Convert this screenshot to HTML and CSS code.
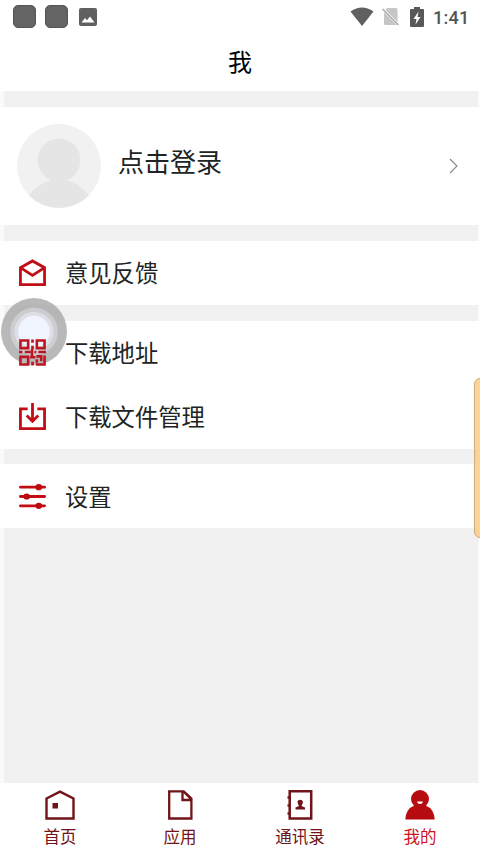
FILE: index.html
```html
<!DOCTYPE html>
<html lang="zh-CN">
<head>
<meta charset="utf-8">
<title>我</title>
<link rel="stylesheet" href="styles.css">
</head>
<body>
<div class="app">
  <div class="status">
    <i class="app-dot"></i><i class="app-dot"></i>
    <svg class="photo" width="18" height="18" viewBox="0 0 18 18"><rect width="18" height="18" rx="2" fill="#606060"/><path d="M2.500 14.500 6 10l2 2.200L11 8.500l4.500 6z" fill="#fff"/></svg>
    <span class="spacer"></span>
    <svg class="wifi" width="24" height="20" viewBox="0 0 24 20"><path d="M.5 4.500Q12-3.500 23.500 4.500L12 19z" fill="#606060"/></svg>
    <svg class="sim" width="19" height="20" viewBox="0 0 19 20"><path d="M6 1h9q1.500 0 1.500 1.500V15L4.500 3zM3 5l13 13H4.500Q3 18 3 16.500z" fill="#c6c6c6"/><path d="M1.500 2l16 16" stroke="#a5a5a5" stroke-width="1.200"/></svg>
    <svg class="battery" width="14" height="20" viewBox="0 0 14 20"><path d="M4 0h6v2h3q1 0 1 1v16q0 1-1 1H1q-1 0-1-1V3q0-1 1-1h3z" fill="#585858"/><path d="M8.500 4.500 3.500 12H6.500L5.500 17.500l5-7.500H7.500z" fill="#fff"/></svg>
    <span class="clock">1:41</span>
  </div>
  <header class="title">我</header>
  <main class="content">
    <section class="profile">
      <svg width="86" height="86" viewBox="0 0 86 86"><defs><clipPath id="round"><circle cx="43" cy="43" r="42"/></clipPath></defs><circle cx="43" cy="43" r="42" fill="#f1f1f1"/><g clip-path="url(#round)" fill="#e5e5e5"><circle cx="43" cy="37" r="21.500"/><path d="M12 74Q21 61 35 57H51Q65 61 74 74V86H12z"/></g></svg>
      <span class="login">点击登录</span>
      <svg class="arrow" width="9" height="16" viewBox="0 0 9 16"><path d="M1 1l7 7-7 7" fill="none" stroke="#858989" stroke-width="1.100"/></svg>
    </section>
    <section class="group">
      <div class="row"><svg class="icon" viewBox="0 0 28 28"><path d="M1.500 9 14 2l12.500 7V26.500h-25zM1.500 9 14 17l12.500-8" fill="none" stroke="#c30d14" stroke-width="2.900"/></svg><span>意见反馈</span></div>
    </section>
    <section class="group">
      <div class="row"><svg class="icon raised" viewBox="0 0 28 28"><g fill="none" stroke="#bd1422" stroke-width="2.700"><path d="M1.500 1.500h8v8h-8zM18.500 1.500h8v8h-8zM1.500 18.500h8v8h-8z"/><path d="M14 .5v3.500M14 7v4M0 13.500h3.500M6 13.500h6M13.500 11v8M11.500 19H17M14 23.500v4M16 13.500h2M20 13.500h8M18 18h5v5M26.500 17v6.500M18.500 21v3.500M17.500 26.500h9v-3"/></g></svg><span>下载地址</span></div>
      <div class="row"><svg class="icon" viewBox="0 0 28 28"><path d="M9 6H1.500v20.500h25V6H19M14 0v19M8 13l6 6 6-6" fill="none" stroke="#c30d14" stroke-width="2.900"/></svg><span>下载文件管理</span></div>
    </section>
    <section class="group">
      <div class="row"><svg class="icon" viewBox="0 0 28 28"><path d="M1.500 4.300h25M1.500 14h25M1.500 23.700h25" stroke="#c30d14" stroke-width="3" stroke-linecap="round"/><g fill="#b90c12"><ellipse cx="20.500" cy="4.300" rx="3.500" ry="3.200"/><ellipse cx="8" cy="14" rx="3.500" ry="3.200"/><ellipse cx="20.500" cy="23.700" rx="3.500" ry="3.200"/></g></svg><span>设置</span></div>
    </section>
  </main>
  <nav class="tabs">
    <div class="tab"><svg viewBox="0 0 30 30"><path d="M1.500 8.500 15 1.700l13.500 6.800v20h-27z" fill="none" stroke="#701419" stroke-width="2.400"/><path d="M7.500 13h5.500v5.500H7.500z" fill="#701419"/></svg><span>首页</span></div>
    <div class="tab"><svg viewBox="0 0 30 30"><path d="M4.200 1.300h14.500l7.700 7.200v20H4.200zM17.500 1.500v8.500h8.500M19 2l7 7" fill="none" stroke="#701419" stroke-width="2.300"/></svg><span>应用</span></div>
    <div class="tab"><svg viewBox="0 0 30 30"><path d="M4.700 1.300h21.500v27.200H4.700z" fill="none" stroke="#701419" stroke-width="2.500"/><path d="M2.500 7.500h3M2.500 15.500h3M2.500 23.500h3" stroke="#701419" stroke-width="2.600"/><path d="M10.500 19.500v-2l3.500-1.500q-3.500-6 1.200-6.300 4.700.3 1.300 6.300l3.500 1.500v2z" fill="#701419"/></svg><span>通讯录</span></div>
    <div class="tab active"><svg viewBox="0 0 30 30"><circle cx="15" cy="9" r="9" fill="#b70b12"/><path d="M.3 29.500Q1 18.500 9.500 15.500h11q8.500 3 9.200 14z" fill="#b70b12"/><path d="M12 11.500h6q-.5 2.600-3 2.600t-3-2.600z" fill="#fff"/></svg><span>我的</span></div>
  </nav>
  <div class="touch"></div>
  <div class="edge-panel"></div>
</div>
</body>
</html>
```
FILE: styles.css
```css
* { box-sizing: border-box; }
body { margin: 0; background: #fff; font-family: "Noto Sans CJK SC", sans-serif; color: #202424; }
.app { position: relative; width: 480px; height: 852px; overflow: hidden; display: flex; flex-direction: column; }
svg { display: block; flex: none; }
.status { height: 33px; display: flex; align-items: center; padding: 0 11px 0 13px; }
.app-dot { width: 23px; height: 23px; border-radius: 5px; background: #646464; border: 1px solid #555; margin-right: 9px; }
.photo { margin-left: 2px; }
.spacer { flex: 1; }
.wifi { margin-right: 7px; }
.sim { margin-right: 10px; }
.battery { margin-right: 9px; }
.clock { width: 36px; font: 500 18px/33px Roboto, sans-serif; color: #505557; letter-spacing: .3px; white-space: nowrap; padding-top: 1px; }
.title { height: 58px; line-height: 55px; text-align: center; font-size: 24px; color: #000; }
.content { flex: 1; display: flex; flex-direction: column; gap: 15.800px; padding-top: 16px; background: linear-gradient(90deg, #fafafa 0 3px, #f1f1f1 5px 478px, #fff 479px); }
.profile { height: 118px; background: #fff; display: flex; align-items: center; padding: 0 22px 0 16px; }
.login { flex: 1; margin-left: 16px; font-size: 26px; line-height: 38px; padding-bottom: 10px; }
.group { background: #fff; }
.row { height: 64px; display: flex; align-items: center; padding-left: 19px; gap: 19px; font-size: 23.3px; line-height: 34px; }
.row span { padding-bottom: 1px; }
.icon { width: 27px; height: 27px; }
.raised { position: relative; z-index: 2; }
.tabs { height: 69px; display: flex; background: #fff; }
.tab { flex: 1; display: flex; flex-direction: column; align-items: center; padding-top: 7px; font-size: 16.5px; line-height: 24px; color: #701419; }
.tab svg { width: 30px; height: 30px; margin-bottom: 4px; }
.active { color: #cf1019; }
.touch { position: absolute; z-index: 1; left: 1px; top: 298px; width: 66px; height: 67px; border-radius: 50%; background: radial-gradient(circle, rgba(240,244,254,.96) 0 15px, rgba(220,221,228,.92) 16.500px 19px, rgba(200,200,206,.9) 20px 23px, rgba(165,165,165,.78) 24.500px); }
.edge-panel { position: absolute; left: 474px; top: 378px; width: 12px; height: 160px; border: 1px solid #c9ae80; border-radius: 6px; background: rgba(253,203,126,.82); }
```
